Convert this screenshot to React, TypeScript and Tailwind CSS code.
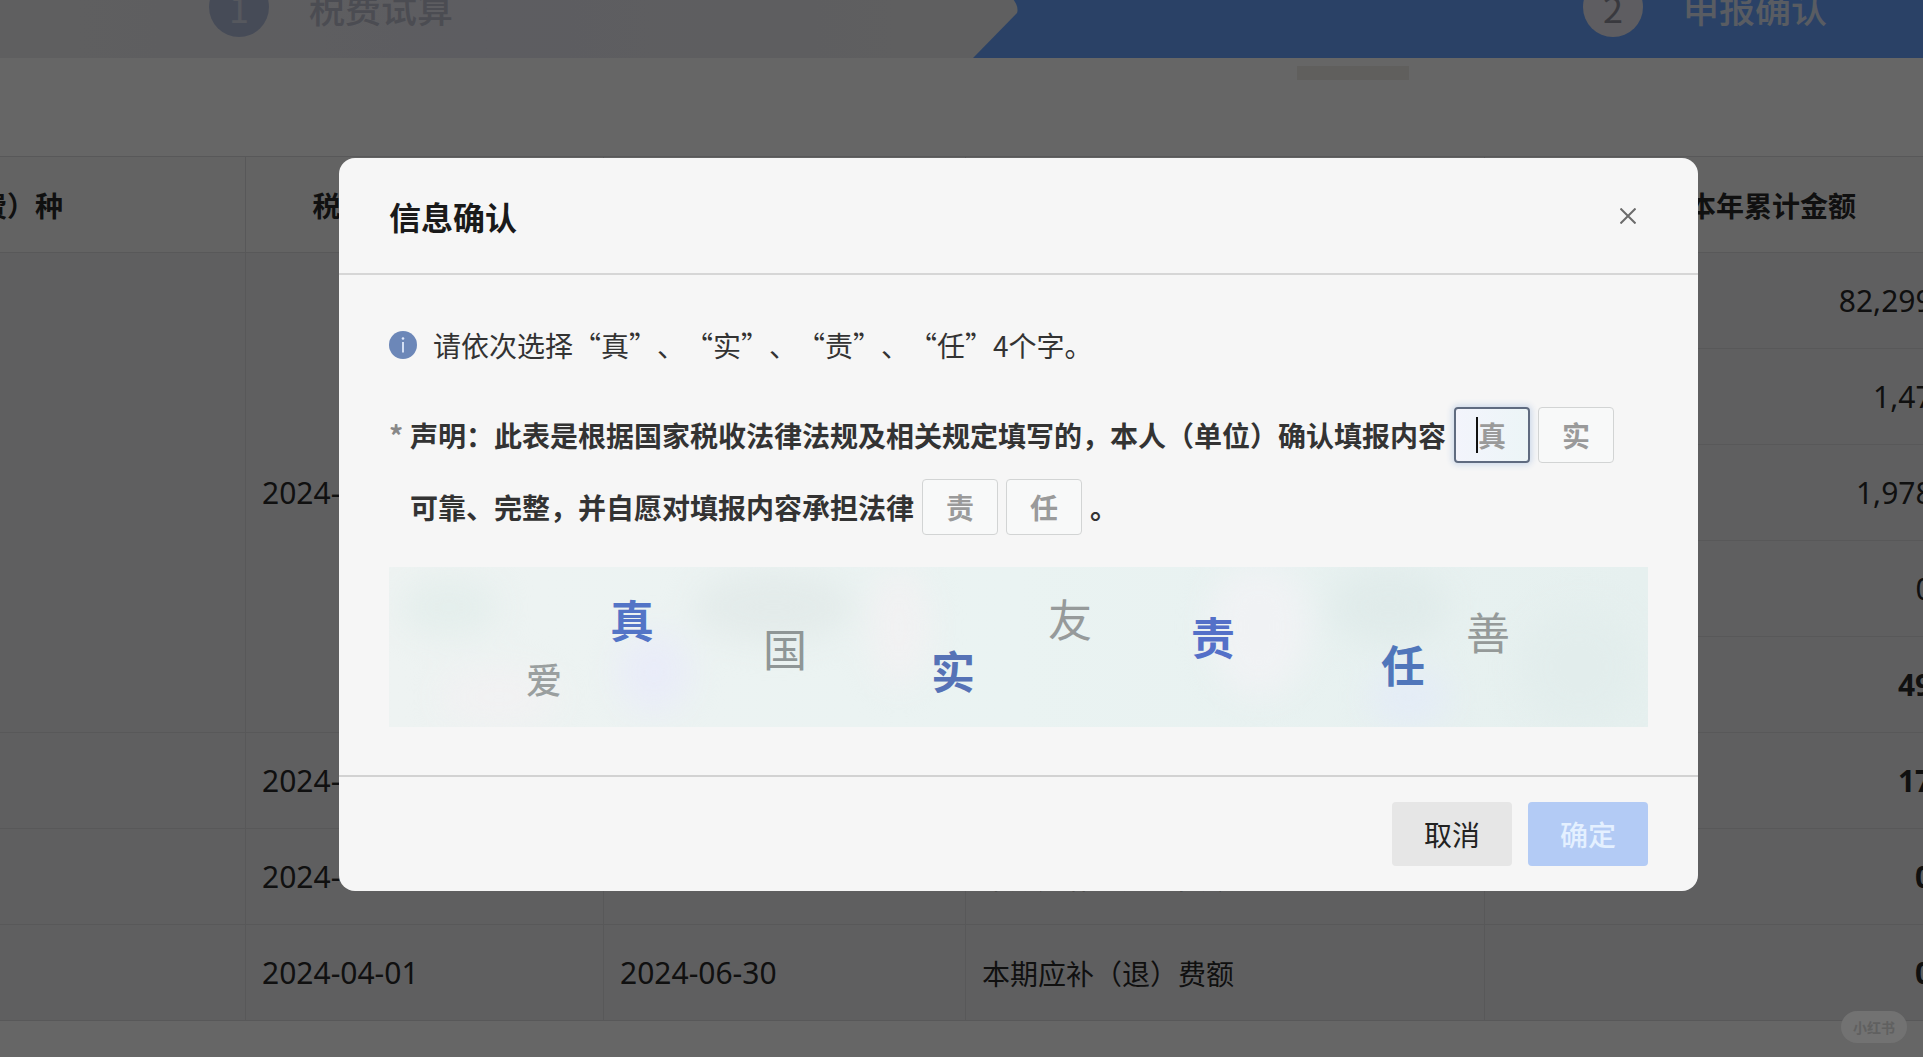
import { useState } from 'react';
import clsx from 'clsx';

const rows = [
  { amount: '82,299.00' },
  { amount: '1,478.5' },
  { amount: '1,978.00' },
  { amount: '0.00' },
  { amount: '49.38', bold: true },
  { start: '2024-04-01', end: '2024-06-30', item: '本期应补（退）费额', amount: '17.00', bold: true },
  { start: '2024-04-01', end: '2024-06-30', item: '本期应补（退）费额', amount: '0.00', bold: true },
  { start: '2024-04-01', end: '2024-06-30', item: '本期应补（退）费额', amount: '0.00', bold: true },
];

const chars = [
  { char: '爱', x: 137, y: 93, size: 'text-4xl', color: 'font-medium text-[#9a9f9f]' },
  { char: '真', x: 221, y: 30, size: 'text-[44px]', color: 'font-bold text-[#5374c6]' },
  { char: '国', x: 374, y: 59, size: 'text-[44px]', color: 'text-[#8f9696]' },
  { char: '实', x: 542, y: 81, size: 'text-[44px]', color: 'font-bold text-[#5672b6]' },
  { char: '友', x: 659, y: 29, size: 'text-[44px]', color: 'text-[#969a9a]' },
  { char: '责', x: 802, y: 47, size: 'text-[44px]', color: 'font-bold text-[#5470c8]' },
  { char: '任', x: 992, y: 75, size: 'text-[44px]', color: 'font-bold text-[#5076ba]' },
  { char: '善', x: 1077, y: 42, size: 'text-[44px]', color: 'text-[#959a99]' },
];

function Steps() {
  return (
    <div className="-mt-11 flex h-[102px] bg-[#6aa4ff]">
      <div className="flex w-[973px] shrink-0 items-center bg-linear-to-r from-[#eeeef0] via-[#e8e8f2] to-[#eeeef0] pl-[209px]">
        <span className="flex size-[60px] items-center justify-center rounded-full bg-[#b0bcda] text-4xl text-[#d6dcec]">1</span>
        <span className="ml-10 text-4xl font-medium text-[#bcbdcc]">税费试算</span>
      </div>
      <svg className="h-full w-[46px] shrink-0" viewBox="0 0 46 102" aria-hidden="true">
        <path d="M0 0 L40 43 Q46 51 44 57 L0 102 Z" fill="#eeeef0" />
      </svg>
      <div className="flex flex-1 items-center pl-[564px]">
        <span className="flex size-[60px] items-center justify-center rounded-full bg-[#eae9f2] text-4xl text-[#8f8f9c]">2</span>
        <span className="ml-10 text-4xl font-medium whitespace-nowrap text-[#dfe6f6]">申报确认</span>
      </div>
    </div>
  );
}

function TaxTable() {
  const cell = 'border border-[#dcdcde] px-4';
  const num = "font-['Noto_Sans',sans-serif] text-3xl";
  return (
    <table className="-ml-[260px] w-[2320px] table-fixed border-collapse bg-[#eeeef1] text-[28px] text-[#2a2a2a]">
      <colgroup>
        <col className="w-[505px]" />
        <col className="w-[358px]" />
        <col className="w-[362px]" />
        <col className="w-[519px]" />
        <col />
      </colgroup>
      <thead>
        <tr className="h-24 bg-[#f8f8f8]">
          <th className={cell}>税（费）种</th>
          <th className={cell}>税（费）所属期起</th>
          <th className={cell}>税（费）所属期止</th>
          <th className={cell}>项目</th>
          <th className={cell}>本年累计金额</th>
        </tr>
      </thead>
      <tbody>
        {rows.map((row, i) => (
          <tr key={i} className="h-24">
            {i === 0 && (
              <>
                <td rowSpan={5} className={cell} />
                <td rowSpan={5} className={clsx(cell, num)}>2024-04-01</td>
                <td rowSpan={5} className={clsx(cell, num)}>2024-06-30</td>
              </>
            )}
            {i > 4 && (
              <>
                <td className={cell} />
                <td className={clsx(cell, num)}>{row.start}</td>
                <td className={clsx(cell, num)}>{row.end}</td>
              </>
            )}
            <td className={cell}>{row.item}</td>
            <td className={clsx(cell, num, 'pr-[84px]! text-right', row.bold && 'font-bold')}>{row.amount}</td>
          </tr>
        ))}
      </tbody>
    </table>
  );
}

function CharInput({ char, value, active }: { char: string; value: string; active: boolean }) {
  return (
    <span className="relative flex">
      <input
        aria-label={char}
        placeholder={char}
        value={value}
        readOnly
        className={clsx(
          'h-14 w-[76px] rounded-sm text-center text-[28px] font-bold placeholder:text-[#9a9a9a] focus:outline-none',
          active
            ? 'border-2 border-[#5f6b80] bg-linear-to-r from-[#f3f4fc] to-[#ecf5f7] shadow-[0_0_6px_2px_#cdd9ea]'
            : 'border border-[#d2d4d4] bg-[#f8f9f9]'
        )}
      />
      {active && <span className="absolute top-2.5 left-[22px] h-9 w-0.5 bg-[#111]" />}
    </span>
  );
}

export default function App() {
  const [open, setOpen] = useState(true);
  const [picked, setPicked] = useState<string[]>([]);

  const pick = (char: string) => {
    if (picked.length < 4) setPicked([...picked, char]);
  };

  const slot = (char: string, index: number) => (
    <CharInput char={char} value={picked[index] ?? ''} active={picked.length === index} />
  );

  return (
    <div className="relative h-screen overflow-hidden bg-white font-['Noto_Sans_CJK_SC',sans-serif]" lang="zh-CN">
      <Steps />
      <div className="flex h-[98px] pt-2 pl-[1297px]">
        <div className="h-3.5 w-28 bg-[#efeee8]" />
      </div>
      <TaxTable />

      {open && (
        <div className="absolute inset-0 flex items-start bg-black/60 pt-[158px] pr-[225px] pl-[339px]">
          <div role="dialog" aria-labelledby="confirm-title" className="flex-1 rounded-2xl bg-[#f6f6f6]">
            <header className="flex h-[117px] items-center justify-between border-b-2 border-[#d6d6d6] px-[50px]">
              <h2 id="confirm-title" className="text-[32px] font-bold text-[#1a1a1a]">信息确认</h2>
              <button type="button" aria-label="关闭" onClick={() => setOpen(false)} className="p-3">
                <svg className="size-4" viewBox="0 0 16 16" fill="none" stroke="#6b6b6b" strokeWidth="2">
                  <path d="M0.5 0.5 L15.5 15.5 M15.5 0.5 L0.5 15.5" />
                </svg>
              </button>
            </header>

            <div className="px-[50px] pt-[46px] pb-12 text-[28px] text-[#333]">
              <p className="flex h-12 items-center [text-spacing-trim:space-all]">
                <svg className="mr-4 size-7" viewBox="0 0 28 28" aria-hidden="true">
                  <circle cx="14" cy="14" r="14" fill="#6c87b8" />
                  <circle cx="14" cy="7.5" r="1.3" fill="#dfe9fb" />
                  <path d="M14 11 V21.5" stroke="#dfe9fb" strokeWidth="1.8" />
                </svg>
                请依次选择“真”、“实”、“责”、“任”4个字。
              </p>
              <div className="mt-[30px] flex font-bold">
                <span className="w-[21px] text-[28px] leading-[72px] text-[#888]">*</span>
                <div className="flex-1 whitespace-nowrap">
                  <div className="flex h-[72px] items-center gap-2">
                    声明：此表是根据国家税收法律法规及相关规定填写的，本人（单位）确认填报内容
                    {slot('真', 0)}
                    {slot('实', 1)}
                  </div>
                  <div className="flex h-[72px] items-center gap-2">
                    可靠、完整，并自愿对填报内容承担法律
                    {slot('责', 2)}
                    {slot('任', 3)}
                    <span>。</span>
                  </div>
                </div>
              </div>
              <div className="relative mt-6 h-40 overflow-hidden bg-linear-to-r from-[#eef3f2] via-[#eaf3f2] to-[#e6f0ef]">
                <svg className="absolute inset-0 size-full blur-lg" viewBox="0 0 1259 160" preserveAspectRatio="none" aria-hidden="true">
                  <ellipse cx="60" cy="40" rx="50" ry="30" fill="#e4eeec" />
                  <ellipse cx="110" cy="130" rx="60" ry="30" fill="#f1f1f2" />
                  <ellipse cx="265" cy="105" rx="36" ry="40" fill="#e9ecf8" />
                  <ellipse cx="385" cy="40" rx="80" ry="36" fill="#e3ebea" />
                  <ellipse cx="510" cy="60" rx="30" ry="60" fill="#f1f1f2" />
                  <ellipse cx="870" cy="60" rx="50" ry="70" fill="#f0f2f4" />
                  <ellipse cx="1000" cy="40" rx="60" ry="40" fill="#e0ebea" />
                  <ellipse cx="1020" cy="130" rx="40" ry="30" fill="#e4ecf6" />
                  <ellipse cx="1190" cy="100" rx="60" ry="60" fill="#e2edec" />
                </svg>
                {chars.map(({ char, x, y, size, color }) => (
                  <button
                    key={char}
                    type="button"
                    onClick={() => pick(char)}
                    className={clsx('absolute leading-none', size, color)}
                    style={{ left: x, top: y }}
                  >
                    {char}
                  </button>
                ))}
              </div>
            </div>

            <footer className="flex h-[116px] items-center justify-end gap-4 border-t-2 border-[#d2d2d2] px-[50px] text-[28px]">
              <button type="button" onClick={() => setOpen(false)} className="h-16 w-[120px] rounded-sm bg-[#e6e6e6] text-[#222]">
                取消
              </button>
              <button type="button" disabled={picked.length < 4} className="h-16 w-[120px] rounded-sm bg-[#b3cbf5] font-medium text-[#e4f0ff]">
                确定
              </button>
            </footer>
          </div>
        </div>
      )}

      <span className="absolute right-4 bottom-3.5 rounded-full bg-[#727272] px-3 py-1 text-sm leading-6 font-bold text-[#606060]">小红书</span>
    </div>
  );
}
